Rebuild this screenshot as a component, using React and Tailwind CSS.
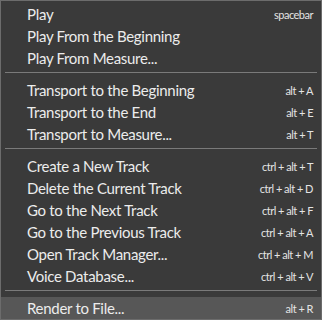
const groups = [
  [
    { label: "Play", keys: "spacebar" },
    { label: "Play From the Beginning" },
    { label: "Play From Measure..." },
  ],
  [
    { label: "Transport to the Beginning", keys: "alt + A" },
    { label: "Transport to the End", keys: "alt + E" },
    { label: "Transport to Measure...", keys: "alt + T" },
  ],
  [
    { label: "Create a New Track", keys: "ctrl + alt + T" },
    { label: "Delete the Current Track", keys: "ctrl + alt + D" },
    { label: "Go to the Next Track", keys: "ctrl + alt + F" },
    { label: "Go to the Previous Track", keys: "ctrl + alt + A" },
    { label: "Open Track Manager...", keys: "ctrl + alt + M" },
    { label: "Voice Database...", keys: "ctrl + alt + V" },
  ],
  [{ label: "Render to File...", keys: "alt + R", active: true }],
];

function MenuItem({ item }) {
  return (
    <div
      className={`flex h-[22px] items-center justify-between pl-[26px] pr-[8px] ${
        item.active ? "bg-[#575757]" : ""
      }`}
    >
      <span className="text-[15px] leading-none tracking-[-0.3px] text-[#ececec]">
        {item.label}
      </span>
      {item.keys && (
        <span className="text-[11px] leading-none tracking-[-0.5px] text-[#e4e4e4]">
          {item.keys}
        </span>
      )}
    </div>
  );
}

export default function App() {
  return (
    <div
      className="h-[320px] w-[322px] overflow-hidden border border-[#6c6c6c] bg-[#3a3a3a] pt-[2px]"
      style={{ fontFamily: "Lato, 'Noto Sans', sans-serif" }}
    >
      {groups.map((group, i) => (
        <div key={i}>
          {i > 0 && (
            <div className="pb-[6px] pt-[3px] px-[4px]">
              <div className="h-px bg-[#7a7a7a]" />
            </div>
          )}
          {group.map((item) => (
            <MenuItem key={item.label} item={item} />
          ))}
        </div>
      ))}
    </div>
  );
}
